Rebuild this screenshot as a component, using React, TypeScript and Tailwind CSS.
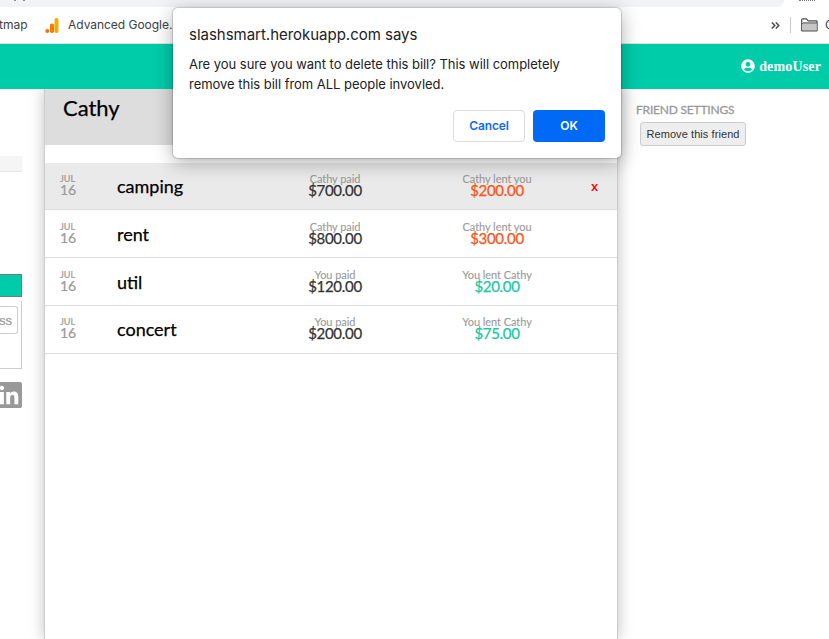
import React from "react";
import { FaUserCircle } from "react-icons/fa";

type Bill = {
  name: string;
  payer: string;
  paid: string;
  lentLabel: string;
  lent: string;
  owed: boolean;
  active?: boolean;
  layout: string;
};

const bills: Bill[] = [
  { name: "camping", payer: "Cathy paid", paid: "$700.00", lentLabel: "Cathy lent you", lent: "$200.00", owed: true, active: true, layout: "h-[47px] pt-[10px]" },
  { name: "rent", payer: "Cathy paid", paid: "$800.00", lentLabel: "Cathy lent you", lent: "$300.00", owed: true, layout: "h-[48px] pt-[11px]" },
  { name: "util", payer: "You paid", paid: "$120.00", lentLabel: "You lent Cathy", lent: "$20.00", owed: false, layout: "h-[48px] pt-[11px]" },
  { name: "concert", payer: "You paid", paid: "$200.00", lentLabel: "You lent Cathy", lent: "$75.00", owed: false, layout: "h-[48px] pt-[10px]" },
];

function BookmarkBar() {
  return (
    <div className="flex h-[37px] items-center border-b border-[#dfe3e2] bg-white font-[Inter,sans-serif] text-[12px] text-[#3c4043]">
      <span className="-mt-px w-[45px] whitespace-nowrap"><span className="-ml-px">tmap</span></span>
      <svg className="mt-px h-[15px] w-[14px]" viewBox="0 0 14 15">
        <rect x="9.5" y="0" width="4" height="15" rx="1.8" fill="#f9ab00" />
        <rect x="5" y="5.5" width="4" height="9.5" rx="1.8" fill="#f57c00" />
        <circle cx="2.3" cy="13" r="2" fill="#ff6d00" />
      </svg>
      <span className="-mt-px ml-[9px] whitespace-nowrap tracking-[-0.03px]">Advanced Google...</span>
      <div className="ml-auto flex items-center">
        <svg className="h-[7px] w-[9px]" viewBox="0 0 9 7" fill="none" stroke="#4a4d51" strokeWidth="1.5">
          <path d="M.8.5 3.8 3.5.8 6.5M4.8.5 7.8 3.5 4.8 6.5" />
        </svg>
        <div className="ml-[10px] h-4 w-px bg-[#c8cacd]" />
        <svg className="ml-[10px] h-[14px] w-[17px]" viewBox="0 0 17 14">
          <path d="M.7 12.3V1.7Q.7.9 1.5.9H5.5L7.2 2.8H15.3Q16.1 2.8 16.1 3.6V12.3Q16.1 12.9 15.4 12.9H1.4Q.7 12.9.7 12.3Z" fill="#fff" stroke="#4d4d4d" strokeWidth="1.2" />
          <path d="M1.3 12.3V6L2.2 5H15.5V12.3Z" fill="#c6c6c6" />
          <path d="M.8 6.3 2.3 4.9H16" fill="none" stroke="#4d4d4d" />
        </svg>
        <span className="ml-[7px] w-[4px] overflow-hidden">C</span>
      </div>
    </div>
  );
}

function BillRow({ bill }: { bill: Bill }) {
  return (
    <div className={`flex items-start border-b border-[#ddd] ${bill.layout} ${bill.active ? "bg-[#eaeaea]" : "bg-white"}`}>
      <div className="w-[72px] pl-[15px] pt-px text-[#999] [-webkit-text-stroke:0.2px]">
        <div className="text-[9px] leading-[9px]">JUL</div>
        <div className="text-[14px] leading-[13px]">16</div>
      </div>
      <div className="w-[149px] pt-px text-[18px] leading-[24px] text-black [-webkit-text-stroke:0.25px]">{bill.name}</div>
      <div className="w-[138px] text-center">
        <div className="text-[11px] leading-[11px] tracking-[-0.06px] text-[#999] [-webkit-text-stroke:0.1px]">{bill.payer}</div>
        <div className="text-[15px] leading-[12px] tracking-[-0.3px] text-[#333] [-webkit-text-stroke:0.25px]">{bill.paid}</div>
      </div>
      <div className="ml-[20px] w-[146px] text-center">
        <div className="text-[11px] leading-[11px] tracking-[-0.06px] text-[#999] [-webkit-text-stroke:0.1px]">{bill.lentLabel}</div>
        <div className={`text-[15px] leading-[12px] tracking-[-0.3px] [-webkit-text-stroke:0.25px] ${bill.owed ? "text-[#ff5216]" : "text-[#17c8a5]"}`}>{bill.lent}</div>
      </div>
      {bill.active && <button className="ml-[21px] pt-[5px] font-['Open_Sans',sans-serif] text-[13px] leading-[16px] font-semibold text-[#f00]">x</button>}
    </div>
  );
}

function Sidebar() {
  return (
    <aside className="w-[44px] shrink-0">
      <div className="mt-[67px] h-4 w-[22px] border-b border-[#e8e8e8] bg-[#f5f5f5]" />
      <div className="mt-[102px] h-[23px] w-[22px] border border-l-0 border-[#777] bg-[#00cca9]" />
      <div className="mt-[4px] h-[68px] w-[22px] border-r border-b border-[#ccc] pt-[5px]">
        <div className="flex h-[28px] w-[18px] items-center justify-end overflow-hidden rounded-r-[3px] border border-l-0 border-[#ccc] pt-[2px] pr-[5px] font-['Liberation_Sans',Arial,sans-serif] text-[13px] text-[#999] [-webkit-text-stroke:0.2px]">ss</div>
      </div>
      <div className="mt-[13px] flex w-[22px] justify-end overflow-hidden">
        <svg className="h-[26px] w-[26px] shrink-0" viewBox="0 32 448 448" fill="#999">
          <path d="M416 32H31.9C14.3 32 0 46.5 0 64.3v383.4C0 465.5 14.3 480 31.9 480H416c17.6 0 32-14.5 32-32.3V64.3c0-17.8-14.4-32.3-32-32.3zM135.4 416H69V202.2h66.5V416zm-33.2-243c-21.3 0-38.5-17.3-38.5-38.5S80.9 96 102.2 96c21.2 0 38.5 17.3 38.5 38.5 0 21.3-17.2 38.5-38.5 38.5zm282.1 243h-66.4V312c0-24.8-.5-56.7-34.5-56.7-34.6 0-39.9 27-39.9 54.9V416h-66.4V202.2h63.7v29.2h.9c8.9-16.8 30.6-34.5 62.9-34.5 67.2 0 79.7 44.3 79.7 101.9V416z" />
        </svg>
      </div>
    </aside>
  );
}

function ConfirmDialog() {
  return (
    <div className="absolute left-[173px] top-[8px] flex h-[150px] w-[448px] flex-col rounded-[5px] bg-white px-4 pt-[17px] pb-4 font-[Inter,sans-serif] text-[#202124] shadow-[0_0_1px_1px_rgba(0,0,0,0.16),0_4px_20px_rgba(0,0,0,0.32)]">
      <h1 className="whitespace-nowrap text-[15px] leading-[20px] tracking-[-0.02px]">slashsmart.herokuapp.com says</h1>
      <p className="mt-[9px] whitespace-nowrap text-[13px] leading-[20px] tracking-[-0.03px]">
        Are you sure you want to delete this bill? This will completely
        <br />
        remove this bill from ALL people invovled.
      </p>
      <div className="mt-auto flex justify-end gap-2 text-[12px] font-semibold">
        <button className="h-8 w-[72px] rounded-[4px] border border-[#dadce0] tracking-[-0.1px] text-[#0b6cf0]">Cancel</button>
        <button className="h-8 w-[72px] rounded-[4px] bg-[#0069f5] text-white">OK</button>
      </div>
    </div>
  );
}

export default function App() {
  return (
    <div className="relative flex h-[639px] w-[829px] flex-col overflow-hidden bg-white font-[Lato,sans-serif]">
      <div className="flex h-[7px] shrink-0 items-start bg-white">
        <div className="flex h-[7px] w-[784px] items-start rounded-br-[14px] bg-[#f1f3f4] pl-[14px]">
          <div className="h-px w-[2px] bg-[#8a8d90]" />
          <div className="ml-[7px] h-px w-[2px] bg-[#8a8d90]" />
        </div>
        <div className="ml-[15px] h-px w-[16px] border-t border-dotted border-[#777]" />
      </div>
      <BookmarkBar />
      <header className="flex h-[45px] shrink-0 items-center justify-end gap-[4px] bg-[#00cca9] pr-[8px] text-white">
        <FaUserCircle className="-mt-[2px] h-[14px] w-[14px]" />
        <span className="font-['Liberation_Serif','Times_New_Roman',serif] text-[14px] tracking-[0.15px] font-bold">demoUser</span>
      </header>
      <main className="flex min-h-0 flex-1 overflow-hidden">
        <Sidebar />
        <section className="w-[574px] shrink-0 border-x border-[#ccc] bg-white shadow-[0_0_14px_rgba(0,0,0,0.25)]">
          <div className="h-[56px] bg-[#ddd] pl-[18px] pt-[5px] text-[22px] leading-[28px] text-black [-webkit-text-stroke:0.25px]">Cathy</div>
          <div className="pt-[18px]">
            {bills.map((b) => <BillRow key={b.name} bill={b} />)}
          </div>
        </section>
        <aside className="pl-[18px] pt-[13px]">
          <h2 className="text-[12px] leading-[15px] tracking-[-0.2px] text-[#999] [-webkit-text-stroke:0.3px]">FRIEND SETTINGS</h2>
          <button className="ml-[4px] mt-[5px] block h-[24px] w-[106px] whitespace-nowrap rounded-[3px] border border-[#ccc] bg-[#eee] font-['Liberation_Sans',Arial,sans-serif] text-[11px] tracking-[0.08px] text-[#333]">Remove this friend</button>
        </aside>
      </main>
      <ConfirmDialog />
    </div>
  );
}
